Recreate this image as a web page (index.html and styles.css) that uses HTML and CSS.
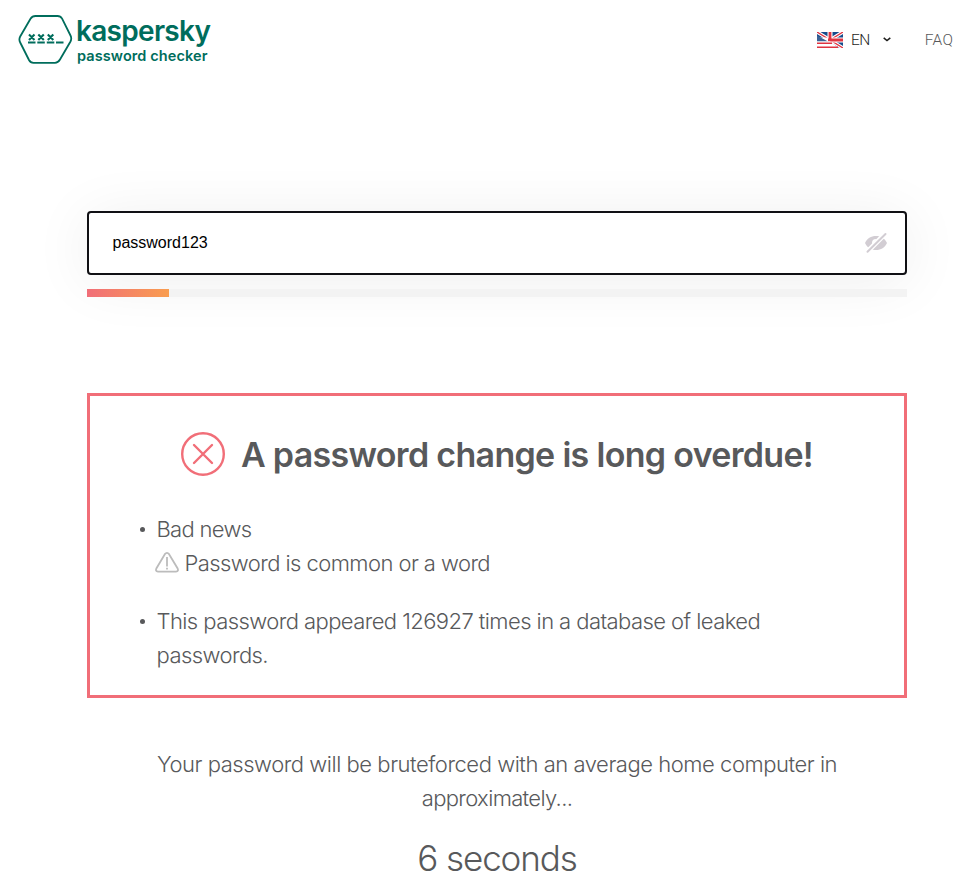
FILE: index.html
```html
<!DOCTYPE html>
<html lang="en">
<head>
<meta charset="utf-8">
<title>Kaspersky Password Checker</title>
<link rel="stylesheet" href="styles.css">
</head>
<body>
<header class="header">
  <a class="logo">
    <svg class="logo-mark" width="56" height="52" viewBox="0 0 56 52" fill="none" stroke="#006d5c">
      <path d="M18.500 3H40.500Q43.500 3 45.100 5.600L53.500 22.500Q55 25.500 53.500 28.500L43 46.500Q41 49.800 38 49.800H16.500Q13.500 49.800 12 47L3.200 29.500Q1.600 26.500 3.200 23.500L13.500 5.800Q15.300 3 18.500 3Z" stroke-width="1.800"/>
      <path d="M12 21.500l5.500 5.500m0-5.500L12 27M21.300 21.500l5.500 5.500m0-5.500L21.300 27M30.800 21.500l5.500 5.500m0-5.500L30.800 27" stroke-width="2.100"/>
      <path d="M11 29.500h7.500M20.300 29.500h7.500M29.800 29.500h7.500M39 29.500h7.500" stroke-width="1.800"/>
    </svg>
    <span class="logo-text"><span class="brand">kaspersky</span><span class="product">password checker</span></span>
  </a>
  <nav class="nav">
    <svg class="flag" width="26" height="16" viewBox="0 0 26 16">
      <path fill="#164b8b" d="M0 0h26v16H0z"/>
      <path stroke="#fff" stroke-width="3.600" d="M0 0l26 16M26 0L0 16"/>
      <path stroke="#df3441" stroke-width="1.300" d="M0 0l26 16M26 0L0 16"/>
      <path stroke="#fff" stroke-width="5" d="M13 0v8M0 8h26"/>
      <path stroke="#df3441" stroke-width="2.800" d="M13 0v8M11 8h15"/>
      <path fill="#3b6295" d="M0 3.500L11 9.500H0z"/>
      <path fill="#fff" d="M0 9.500H13L22 16H0z"/>
      <path stroke="#df3441" stroke-width="1.500" d="M0 11.300h15M0 15.200h21"/>
    </svg>
    <span class="lang">EN</span>
    <svg class="chevron" width="8" height="5" viewBox="0 0 8 5" fill="none" stroke="#1d1d1b" stroke-width="1.500"><path d="M.7.8L4 3.500 7.300.8"/></svg>
    <a class="faq">FAQ</a>
  </nav>
</header>
<main class="main">
  <section class="checker">
    <div class="field">
      <span class="value">password123</span>
      <svg width="24" height="22" viewBox="0 0 24 22">
        <path fill="#d2cdd3" fill-rule="evenodd" d="M1 11C3 6.500 7 4 12 4s9 2.500 11 7c-2 4.500-6 7-11 7S3 15.500 1 11ZM12 7a4 4 0 1 0 0 8 4 4 0 0 0 0-8Z"/>
        <path fill="#d2cdd3" d="M12 7.500L16 9v5l-4 2-2-1Z"/>
        <path stroke="#fff" stroke-width="5" d="M2 21L22 1"/>
        <path stroke="#d2cdd3" stroke-width="2" stroke-linecap="round" d="M3.500 19.700L21.500 2"/>
      </svg>
    </div>
    <div class="meter"><div class="meter-fill"></div></div>
  </section>
  <section class="result">
    <h1 class="title">
      <svg width="44" height="44" viewBox="0 0 44 44" fill="none" stroke="#f16e78" stroke-width="2.400" stroke-linecap="round"><circle cx="22" cy="22" r="20.800"/><path d="M13 13l18 18M31 13L13 31"/></svg>
      <span class="title-text">A password change is long overdue!</span>
    </h1>
    <ul class="list">
      <li class="item"><span class="bad">Bad news</span><br>
        <span class="warning"><svg class="warning-icon" width="24" height="21" viewBox="0 0 24 21" fill="none" stroke="#bcbcbc" stroke-width="1.800"><path d="M9.800 2.200Q12-.3 14.100 2.200L22.500 16.200Q24 19.500 21 19.600H3Q0 19.500 1.500 16.200Z"/><path d="M12 5v9.500M12 15.700v1.800"/></svg><span class="common">Password is common or a word</span></span></li>
      <li class="item"><span class="leak">This password appeared 126927 times in a database of leaked</span><br><span class="tail">passwords.</span></li>
    </ul>
  </section>
  <section class="estimate">
    <p class="estimate-copy"><span class="brute">Your password will be bruteforced with an average home computer in</span><br><span class="approx">approximately...</span></p>
    <p class="time">6 seconds</p>
  </section>
</main>
</body>
</html>
```
FILE: styles.css
```css
* { box-sizing: border-box; }
body { margin: 0; height: 889px; overflow: hidden; background: #fff; color: #58595b; font-family: Inter, "Liberation Sans", sans-serif; }
.header { height: 80px; display: flex; justify-content: space-between; padding: 13px 25px 0 17px; }
.logo { display: flex; color: #006d5c; }
.logo-text { display: flex; flex-direction: column; margin-left: 3px; white-space: nowrap; }
.brand { padding-top: 2px; font-size: 28px; line-height: 32px; font-weight: 600; letter-spacing: -0.7px; }
.product { font-size: 14.5px; line-height: 17px; font-weight: 600; letter-spacing: 0.1px; margin-left: 1px; }
.nav { display: flex; align-items: center; height: 53px; font-size: 15.5px; font-family: Roboto, sans-serif; font-weight: 300; }
.lang { margin-left: 8px; color: #1d1d1b; letter-spacing: -0.5px; }
.chevron { margin-left: 13px; }
.faq { margin-left: 34px; letter-spacing: 0.3px; margin-right: -0.3px; }
.main { width: 820px; margin: 131px 0 0 87px; }
.field { height: 64px; border: 2px solid #101014; border-radius: 4px; display: flex; align-items: center; justify-content: space-between; padding: 0 17px 0 23.5px; background: #fff; box-shadow: 0 6px 60px rgba(0,0,0,.07); color: #000; font: 16px "Liberation Sans", sans-serif; }
.meter { position: relative; height: 8px; margin-top: 14px; background: #f3f3f3; }
.meter-fill { width: 82px; height: 8px; background: linear-gradient(90deg, #f16e78, #f99d4f); }
.result { height: 305px; margin-top: 96px; padding: 36px 47px 0; border: 3px solid #f16e78; }
.title { display: flex; align-items: center; justify-content: center; height: 44px; margin: 0; gap: 16px; font-size: 34px; font-weight: 600; white-space: nowrap; }
.title-text { letter-spacing: -0.69px; }
.list { margin: 36px 0 0; padding: 0 0 0 19.5px; font-size: 22px; line-height: 34px; font-weight: 300; list-style: none; white-space: nowrap; letter-spacing: -0.57px; }
.item { position: relative; }
.item + .item { margin-top: 24px; }
.item::before { content: ""; position: absolute; left: -17px; top: 15px; width: 5px; height: 5px; border-radius: 50%; background: #58595b; }
.bad { letter-spacing: -0.7px; }
.warning { display: flex; align-items: center; margin-left: -2px; gap: 6px; }
.warning-icon { margin-bottom: 2px; }
.estimate { margin-top: 49px; text-align: center; font-weight: 300; white-space: nowrap; }
.estimate-copy { margin: 0; font-size: 22px; line-height: 34px; }
.brute { letter-spacing: -0.46px; }
.approx { letter-spacing: -0.65px; }
.time { margin: 20px 0 0; font-size: 35px; line-height: 46px; letter-spacing: -1.1px; }
```
